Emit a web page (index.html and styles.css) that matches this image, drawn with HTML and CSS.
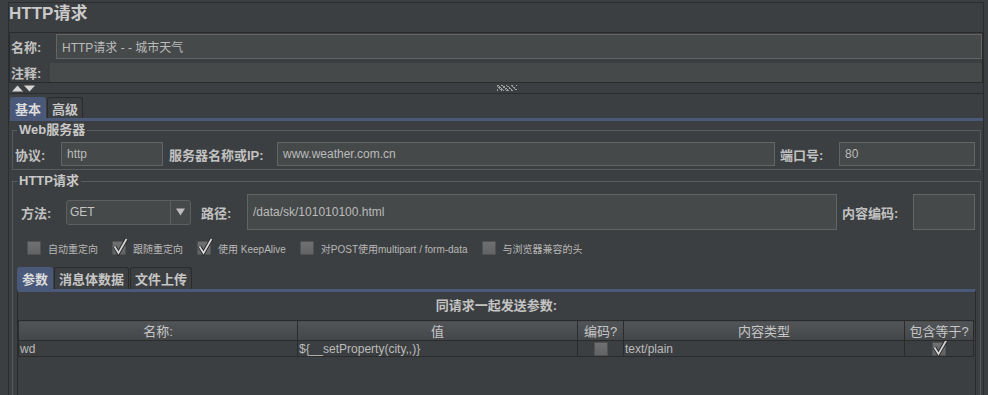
FILE: index.html
```html
<!DOCTYPE html>
<html lang="zh">
<head>
  <meta charset="UTF-8" />
  <title>HTTP请求</title>
  <link rel="stylesheet" href="styles.css">
</head>
<body>
  <div class="panel">
    <div class="title">HTTP请求</div>

    <div class="namebox">
      <div class="name-row">
        <span class="lbl name-lbl">名称:</span>
        <div class="field grow">HTTP请求 - - 城市天气</div>
      </div>
      <div class="comment-row">
        <span class="lbl comment-lbl">注释:</span>
        <div class="field flat grow"></div>
      </div>
    </div>

    <div class="splitter">
      <svg class="arrows" width="24" height="7" viewBox="0 0 24 7">
        <polygon points="0,6.5 5.5,0.5 11,6.5" fill="#d6d6d6"/>
        <polygon points="12,0.5 23,0.5 17.5,6.5" fill="#d6d6d6"/>
      </svg>
      <span class="grip"></span>
    </div>

    <div class="tabs main-tabs">
      <span class="tab active">基本</span>
      <span class="tab">高级</span>
    </div>

    <div class="tab-body">
      <fieldset class="group web">
        <legend>Web服务器</legend>
        <div class="server-row">
          <span class="lbl">协议:</span>
          <div class="field">http</div>
          <span class="lbl pad6">服务器名称或IP:</span>
          <div class="field">www.weather.com.cn</div>
          <span class="lbl pad5">端口号:</span>
          <div class="field">80</div>
        </div>
      </fieldset>

      <fieldset class="group http">
        <legend>HTTP请求</legend>
        <div class="path-row">
          <span class="lbl pad7">方法:</span>
          <div class="combo">
            <span class="combo-text">GET</span>
            <span class="combo-btn">
              <svg width="9" height="8" viewBox="0 0 9 8"><polygon points="0,0.5 9,0.5 4.5,7.5" fill="#bdbdbd"/></svg>
            </span>
          </div>
          <span class="lbl pad10">路径:</span>
          <div class="field">/data/sk/101010100.html</div>
          <span class="lbl pad5">内容编码:</span>
          <div class="field"></div>
        </div>

        <div class="options">
          <label class="opt"><span class="cb"></span>自动重定向</label>
          <label class="opt"><span class="cb"><svg class="tick" width="14" height="14" viewBox="0 0 14 14"><path d="M2.5 5.5 L6.5 12 L14.5 -2" fill="none" stroke="#262626" stroke-width="3.6"/><path d="M2.5 5.5 L6.5 12 L14.5 -2" fill="none" stroke="#d4d4d4" stroke-width="1.8"/></svg></span>跟随重定向</label>
          <label class="opt"><span class="cb"><svg class="tick" width="14" height="14" viewBox="0 0 14 14"><path d="M2.5 5.5 L6.5 12 L14.5 -2" fill="none" stroke="#262626" stroke-width="3.6"/><path d="M2.5 5.5 L6.5 12 L14.5 -2" fill="none" stroke="#d4d4d4" stroke-width="1.8"/></svg></span>使用 KeepAlive</label>
          <label class="opt"><span class="cb"></span>对POST使用multipart / form-data</label>
          <label class="opt"><span class="cb"></span>与浏览器兼容的头</label>
        </div>

        <div class="tabs sub-tabs">
          <span class="tab active">参数</span>
          <span class="tab">消息体数据</span>
          <span class="tab">文件上传</span>
        </div>

        <div class="params">
          <div class="caption">同请求一起发送参数:</div>
          <table class="grid">
            <colgroup>
              <col style="width:279px">
              <col style="width:280px">
              <col style="width:46px">
              <col style="width:281px">
              <col style="width:69px">
            </colgroup>
            <thead>
              <tr><th>名称:</th><th>值</th><th>编码?</th><th>内容类型</th><th>包含等于?</th></tr>
            </thead>
            <tbody>
              <tr>
                <td>wd</td>
                <td>${__setProperty(city,,)}</td>
                <td class="center"><span class="cb"></span></td>
                <td>text/plain</td>
                <td class="center"><span class="cb"><svg class="tick" width="14" height="14" viewBox="0 0 14 14"><path d="M2.5 5.5 L6.5 12 L14.5 -2" fill="none" stroke="#262626" stroke-width="3.6"/><path d="M2.5 5.5 L6.5 12 L14.5 -2" fill="none" stroke="#d4d4d4" stroke-width="1.8"/></svg></span></td>
              </tr>
            </tbody>
          </table>
        </div>
      </fieldset>
    </div>
  </div>
</body>
</html>
```
FILE: styles.css
```css
html, body {
  margin: 0;
  height: 395px;
  overflow: hidden;
}
body {
  background-color: #3c3f41;
  color: #bbbbbb;
  font-family: "Liberation Sans", "Noto Sans CJK SC", sans-serif;
  font-size: 12px;
}
.panel {
  margin: 2px 0 0 8px;
  width: 974px;
  min-height: 430px;
  border: 1px solid #2b2d2f;
  border-bottom: 0;
}
.title {
  font-size: 17px;
  font-weight: bold;
  line-height: 22px;
  padding-bottom: 7px;
  color: #cacaca;
}
.lbl {
  font-size: 13px;
  font-weight: bold;
  color: #c2c2c2;
  white-space: nowrap;
}
.field {
  box-sizing: border-box;
  display: flex;
  align-items: center;
  padding: 0 5px;
  background-color: #45494a;
  border: 1px solid #646464;
  color: #bbbbbb;
  white-space: nowrap;
  overflow: hidden;
}
.field.flat {
  border: 0;
}
.grow {
  flex: 1;
}

/* name / comment */
.namebox {
  border: 1px solid #2b2b2b;
  padding-top: 1px;
}
.name-row {
  display: flex;
  align-items: center;
  height: 25px;
}
.name-row .field {
  height: 25px;
}
.name-lbl {
  width: 45px;
  padding-left: 1px;
}
.comment-row {
  display: flex;
  align-items: center;
  height: 19px;
  margin-top: 4px;
}
.comment-row .field {
  height: 19px;
}
.comment-lbl {
  width: 39px;
  padding-left: 1px;
}

/* splitter */
.splitter {
  display: flex;
  align-items: center;
  height: 10px;
  border-bottom: 1px solid #2b2b2b;
}
.arrows {
  margin-left: 3px;
}
.grip {
  width: 20px;
  height: 6px;
  margin-left: 461px;
  background:
    repeating-linear-gradient(135deg, transparent 0 2px, #3c3f41 2px 2.6px),
    repeating-linear-gradient(45deg, #a0a0a0 0 1.5px, transparent 1.5px 3.5px);
}

/* tabs */
.tabs {
  display: flex;
  align-items: flex-end;
  gap: 1px;
}
.tab {
  box-sizing: border-box;
  height: 100%;
  padding: 0 4px;
  border: 1px solid #2b2b2b;
  border-bottom: 0;
  border-radius: 3px 3px 0 0;
  font-size: 13px;
  font-weight: bold;
  color: #c6c6c6;
  display: flex;
  align-items: center;
}
.tab.active {
  background-color: #4a587a;
  border-color: #4a587a;
  color: #dcdcdc;
}
.main-tabs {
  height: 21px;
  margin: 3px 0 0 1px;
}
.tab-body {
  margin-left: 1px;
  border-top: 3px solid #4a587a;
}

/* groups */
.group {
  margin: 1px 2px 0 2px;
  padding: 4px 1px 3px 1px;
  border: 1px solid #595c5e;
  min-width: 0;
}
.group legend {
  margin-left: 3px;
  padding: 0 2px;
  font-size: 13px;
  font-weight: bold;
  line-height: 16px;
  color: #c8c8c8;
}
.group.http {
  margin-top: 3px;
  padding: 5px 1px 0 1px;
}
.server-row {
  display: grid;
  grid-template-columns: 47px 102px 114px 498px 64px 136px;
  align-items: center;
  height: 24px;
}
.server-row .field {
  height: 24px;
}
.server-row .lbl {
  padding-left: 1px;
}
.pad5 { padding-left: 5px; }
.server-row .pad5 { padding-left: 5px; }
.server-row .pad6 { padding-left: 6px; }
.pad7 { padding-left: 7px; }
.pad10 { padding-left: 10px; }
.path-row {
  display: grid;
  grid-template-columns: 52px 125px 56px 590px 76px 62px;
  align-items: center;
  height: 36px;
}
.path-row .field {
  height: 36px;
}
.combo {
  box-sizing: border-box;
  height: 25px;
  display: grid;
  grid-template-columns: 1fr 20px;
  background-color: #45494a;
  border: 1px solid #5e6060;
  border-radius: 3px;
}
.combo-text {
  display: flex;
  align-items: center;
  padding-left: 3px;
  color: #c4c4c4;
}
.combo-btn {
  display: flex;
  align-items: center;
  justify-content: center;
  border-left: 1px solid #5e6060;
}

/* checkboxes */
.options {
  display: flex;
  align-items: center;
  gap: 14px;
  height: 14px;
  margin-top: 11px;
  padding-left: 13px;
  font-size: 10px;
  color: #b8b8b8;
}
.opt {
  display: flex;
  align-items: center;
  gap: 7px;
  white-space: nowrap;
}
.cb {
  box-sizing: border-box;
  display: inline-block;
  flex: none;
  position: relative;
  width: 14px;
  height: 14px;
  border: 1px solid #505254;
  border-radius: 1px;
  background: linear-gradient(#6e7072, #616365);
  vertical-align: middle;
}
.tick {
  position: absolute;
  left: -1px;
  top: -1px;
  overflow: visible;
}

/* params */
.sub-tabs {
  height: 22px;
  margin-top: 12px;
  padding-left: 3px;
}
.params {
  margin: 0 3px;
  min-height: 110px;
  border-left: 1px solid #2b2b2b;
  border-right: 1px solid #2b2b2b;
  border-top: 3px solid #4a587a;
}
.caption {
  height: 28px;
  line-height: 28px;
  text-align: center;
  font-size: 13px;
  font-weight: bold;
  color: #c4c4c4;
}
.grid {
  width: 955px;
  table-layout: fixed;
  border-collapse: collapse;
}
.grid th {
  height: 18px;
  padding: 0;
  border: 1px solid #2b2b2b;
  background: linear-gradient(#525558, #44474a);
  font-size: 13px;
  font-weight: normal;
  color: #c6c6c6;
  white-space: nowrap;
}
.grid td {
  height: 15px;
  padding: 0 1px;
  border: 1px solid #2b2b2b;
  border-top: 0;
  white-space: nowrap;
  overflow: hidden;
}
.grid td.center {
  text-align: center;
  line-height: 0;
}
```
